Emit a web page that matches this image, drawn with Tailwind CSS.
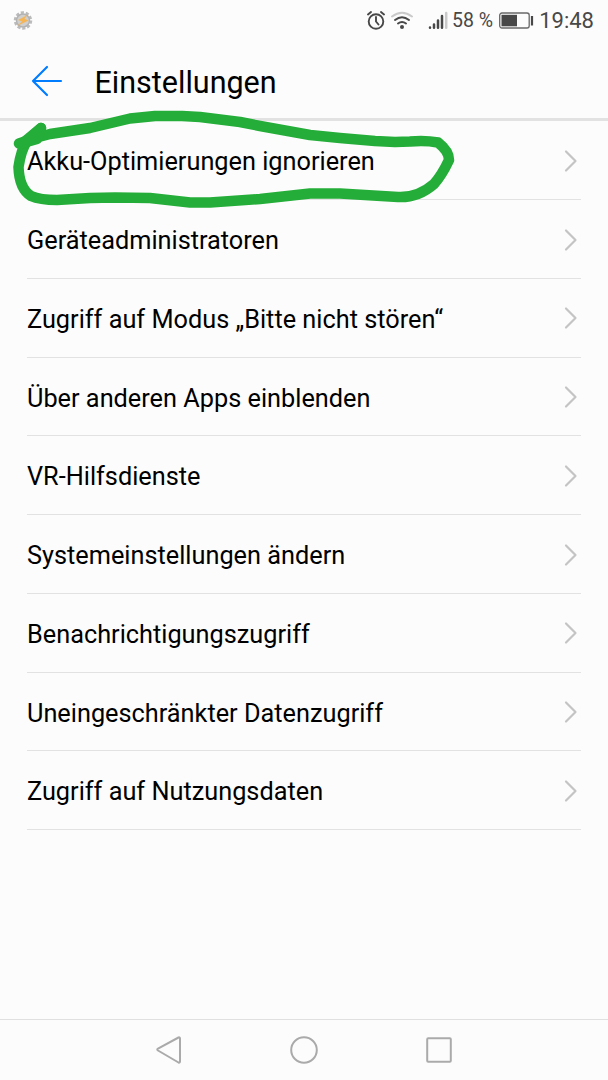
<!DOCTYPE html>
<html lang="de">
<head>
<meta charset="utf-8">
<title>Einstellungen</title>
<script src="https://cdn.jsdelivr.net/npm/@tailwindcss/browser@4"></script>
</head>
<body class="relative flex h-[1080px] w-[608px] flex-col overflow-hidden bg-[#fcfcfc] font-['Roboto',sans-serif] text-black">
<div class="flex h-[42px] items-center pr-[14px] pl-[13px] text-[#484848]">
  <svg class="h-5 w-5" viewBox="0 0 20 20"><circle cx="10" cy="9.500" r="8" fill="none" stroke="#bbb" stroke-width="2.500" stroke-dasharray="3.200 1.830"/><circle cx="10" cy="9.500" r="6.500" fill="#cfcfcf" stroke="#b2b2b2" stroke-width="1.500"/><path d="M14.500 4 5 9l4 1.500L4 15l11.500-5.500-4-1.700z" fill="#f5b556"/></svg>
  <svg class="ml-[334px] h-5 w-[18px]" viewBox="0 0 18 20" fill="none" stroke="#484848" stroke-width="1.900" stroke-linecap="round"><circle cx="9" cy="10.500" r="7.300"/><path d="M9 6v4.500l2.500 3M1 3.500 4 1M17 3.500 14 1"/></svg>
  <svg class="ml-[5px] h-5 w-6" viewBox="0 0 24 20" fill="none" stroke="#484848" stroke-width="2" stroke-linecap="round"><path d="M2 5.500Q12-2 22 5.500" stroke="#cacaca"/><path d="M5 9Q12 3.500 19 9M8 12.500Q12 9.500 16 12.500"/><circle cx="12" cy="16" r="2" fill="#484848" stroke="none"/></svg>
  <svg class="ml-[14px] h-5 w-5" viewBox="0 0 20 20" stroke-width="2.500" stroke-linecap="round"><path d="M2 16.600v.1M6 13.500v3.200M10 9.500v7.200M14 5v11.700" stroke="#484848"/><path d="M18.200 2v14.700" stroke="#cacaca"/></svg>
  <span class="ml-[4px] w-[42px] text-[19.500px] whitespace-nowrap">58 %</span>
  <svg class="ml-[5px] h-5 w-[35px]" viewBox="0 0 35 20"><rect x=".7" y="2" width="29.500" height="15" rx="2.200" fill="none" stroke="#686868" stroke-width="1.300"/><path d="M2.500 3.800H18v11.500H2.500z" fill="#484848"/><path d="M33 5v9.500" stroke="#484848" stroke-width="2.200"/></svg>
  <span class="ml-auto pb-px text-[22px] whitespace-nowrap">19:48</span>
</div>
<header class="flex h-[79px] items-center border-b-[3px] border-[#e2e2e2] pt-[2px] pl-[31px]">
  <svg class="h-8 w-8" viewBox="0 0 32 32" fill="none" stroke="#007dff" stroke-width="2.200" stroke-linecap="round" stroke-linejoin="round"><path d="M30 16H2M16 2 2 16l14 14"/></svg>
  <h1 class="ml-[31.500px] pt-[3px] text-[30.500px]">Einstellungen</h1>
</header>
<main class="flex-1 px-[27px] pt-[.4px] text-[25.300px] [font-variant-ligatures:none]">
  <div class="row flex h-[78.750px] items-center justify-between border-b border-[#e2e2e2]"><span class="pt-[4px]">Akku-Optimierungen ignorieren</span></div>
  <div class="row flex h-[78.750px] items-center justify-between border-b border-[#e2e2e2]"><span class="pt-[4px]">Geräteadministratoren</span></div>
  <div class="row flex h-[78.750px] items-center justify-between border-b border-[#e2e2e2]"><span class="pt-[4px]">Zugriff auf Modus „Bitte nicht stören“</span></div>
  <div class="row flex h-[78.750px] items-center justify-between border-b border-[#e2e2e2]"><span class="pt-[4px]">Über anderen Apps einblenden</span></div>
  <div class="row flex h-[78.750px] items-center justify-between border-b border-[#e2e2e2]"><span class="pt-[4px]">VR-Hilfsdienste</span></div>
  <div class="row flex h-[78.750px] items-center justify-between border-b border-[#e2e2e2]"><span class="pt-[4px]">Systemeinstellungen ändern</span></div>
  <div class="row flex h-[78.750px] items-center justify-between border-b border-[#e2e2e2]"><span class="pt-[4px]">Benachrichtigungszugriff</span></div>
  <div class="row flex h-[78.750px] items-center justify-between border-b border-[#e2e2e2]"><span class="pt-[4px]">Uneingeschränkter Datenzugriff</span></div>
  <div class="row flex h-[78.750px] items-center justify-between border-b border-[#e2e2e2]"><span class="pt-[4px]">Zugriff auf Nutzungsdaten</span></div>
</main>
<nav class="flex h-[61px] items-center border-t border-[#e0e0e0] pl-[156px]">
  <svg class="h-7 w-[26px]" viewBox="0 0 26 28" fill="none" stroke="#aaa" stroke-width="2" stroke-linejoin="round"><path d="M2 12.700Q.5 13.500 2 14.500L22.500 26.500Q24 27 24 25.500V2.500Q24 1 22.500 1.500z"/></svg>
  <svg class="ml-[108px] h-7 w-7" viewBox="0 0 28 28" fill="none" stroke="#aaa" stroke-width="2"><circle cx="14" cy="14" r="12.800"/></svg>
  <svg class="ml-[108px] h-7 w-[26px]" viewBox="0 0 26 28" fill="none" stroke="#aaa" stroke-width="2"><rect x="1.200" y="2.200" width="23.600" height="23.600" rx="1"/></svg>
</nav>
<svg class="pointer-events-none absolute top-0 left-0 h-[220px] w-[608px]" viewBox="0 0 608 220" fill="none" stroke="#24ad38" stroke-width="10.500" stroke-linecap="round" stroke-linejoin="round"><path d="M41 128 27 141Q21 150 18.500 167C19 182 23 191 31 196Q40 200 57 200L90 198 115 197.500 150 198 190 202.500 210 202.500 260 199 310 193.500 340 193.500 398 197Q418 198 434 184Q442 175 449 160Q449 151 438 142.500Q425 140 410 141.500L395 142 375 141 340 138 310 135 260 126 240 122 200 117 182 116H155L130 118.500 90 128 50 134 35 138 19 143.500"/><path d="m41 128-18 15 14-4z" fill="#24ad38"/></svg>
<script>
document.querySelectorAll('.row').forEach(row => row.insertAdjacentHTML('beforeend', '<svg class="mt-px mr-[3px] h-6 w-[15px]" viewBox="0 0 15 24" fill="none" stroke="#c4c4c4" stroke-width="2.200" stroke-linecap="round" stroke-linejoin="round"><path d="M3 2.500 12.500 12 3 21.500"/></svg>'));
</script>
</body>
</html>
